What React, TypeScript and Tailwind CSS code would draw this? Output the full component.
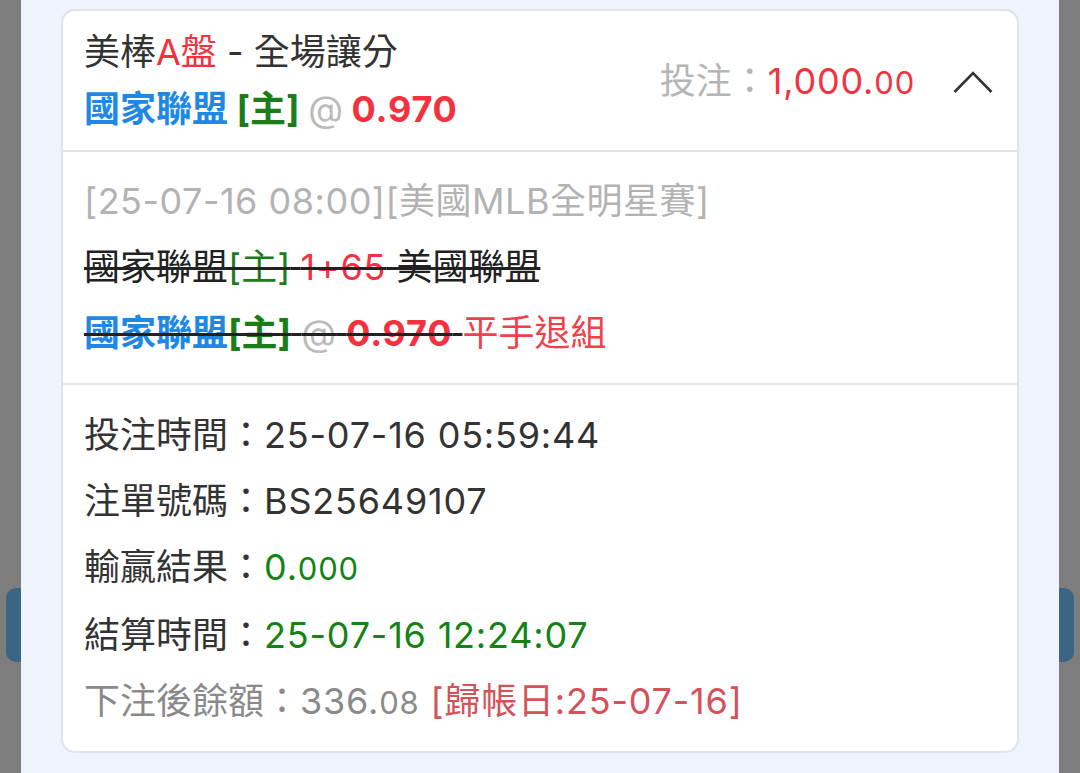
import React from 'react';

const font = { fontFamily: 'Inter, "Noto Sans CJK TC", sans-serif' };

function Row({ label, children, muted }: { label: string; children: React.ReactNode; muted?: boolean }) {
  return (
    <div className={`leading-[66px] whitespace-nowrap ${muted ? 'text-[#8a8a8a]' : 'text-[#333]'}`}>
      {label}：<span className="tracking-[0.8px]">{children}</span>
    </div>
  );
}

function App() {
  return (
    <div className="flex h-[773px] w-[1080px] overflow-hidden bg-[#eef3fc] text-[36px]" style={font}>
      {/* dimmed edges with the side tabs */}
      <div className="w-[21px] shrink-0 bg-[#7d7d7d] pt-[588px]">
        <div className="ml-[6px] h-[74px] w-[15px] rounded-l-[10px] bg-[#3b6585]" />
      </div>

      <div className="flex-1 px-[40px] pt-[9px]">
        <div className="overflow-hidden rounded-[14px] border-2 border-[#dfe3ea] bg-white">
          {/* header */}
          <div className="flex items-center justify-between pl-[21px] pr-[24px] pt-[13px] pb-[12px] border-b-2 border-[#e4e4e4]">
            <div className="leading-[57px] whitespace-nowrap">
              <div className="text-[#333]">
                美棒<span className="text-[#f2323f]">A盤</span> - 全場讓分
              </div>
              <div className="font-bold">
                <span className="text-[#1e88e5]">國家聯盟</span>{' '}
                <span className="text-[#1a7d1a]">[主]</span>{' '}
                <span className="font-normal text-[#bbbbbb]">@</span>{' '}
                <span className="text-[#f2323f] tracking-[0.8px]">0.970</span>
              </div>
            </div>
            <div className="flex items-center">
              <span className="text-[#b5b5b5]">投注：</span>
              <span className="text-[#f2323f] tracking-[0.8px]">
                1,000.<span className="text-[31px]">00</span>
              </span>
              <svg className="ml-[38px] mt-[2px]" width="40" height="24" viewBox="0 0 40 24" fill="none">
                <polyline points="1.5,22 20,3 38.5,22" stroke="#333" strokeWidth="2.6" strokeLinejoin="miter" />
              </svg>
            </div>
          </div>

          {/* match info */}
          <div className="px-[21px] pt-[16px] pb-[17px] leading-[66px] whitespace-nowrap border-b-2 border-[#e4e4e4]">
            <div className="text-[#b3b3b3] tracking-[0.5px]">[25-07-16 08:00][美國MLB全明星賽]</div>
            <div>
              <span className="line-through decoration-[2.5px] decoration-[#222] text-[#222]">
                國家聯盟<span className="text-[#1a7d1a]">[主]</span>{' '}
                <span className="text-[#f2323f] tracking-[0.8px]">1+65</span> 美國聯盟
              </span>
            </div>
            <div>
              <span className="line-through decoration-[2.5px] decoration-[#222]">
                <span className="font-bold text-[#1e88e5]">國家聯盟</span>
                <span className="font-bold text-[#1a7d1a]">[主]</span>{' '}
                <span className="text-[#bbbbbb]">@</span>{' '}
                <span className="font-bold text-[#f2323f] tracking-[0.8px]">0.970</span>{' '}
              </span>
              <span className="text-[#f0404a]">平手退組</span>
            </div>
          </div>

          {/* bet details */}
          <div className="px-[21px] pt-[17px] pb-[15px]">
            <Row label="投注時間">25-07-16 05:59:44</Row>
            <Row label="注單號碼">BS25649107</Row>
            <Row label="輸贏結果">
              <span className="text-[#138313]">
                0.<span className="text-[31px]">000</span>
              </span>
            </Row>
            <Row label="結算時間">
              <span className="text-[#138313]">25-07-16 12:24:07</span>
            </Row>
            <Row label="下注後餘額" muted>
              336.<span className="text-[31px]">08</span>{' '}
              <span className="text-[#d4525a]">[歸帳日:25-07-16]</span>
            </Row>
          </div>
        </div>
      </div>

      <div className="w-[21px] shrink-0 bg-[#7d7d7d] pt-[588px]">
        <div className="h-[74px] w-[15px] rounded-r-[10px] bg-[#3b6585]" />
      </div>
    </div>
  );
}

export default App;
